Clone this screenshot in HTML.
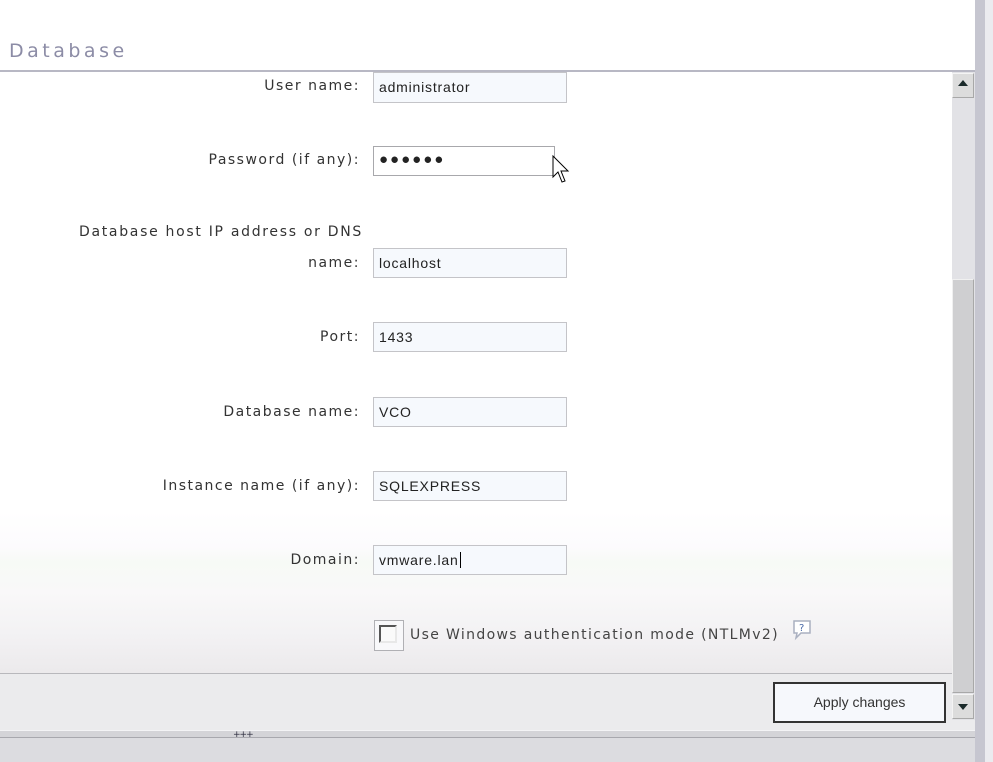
<!DOCTYPE html>
<html><head><style>
*{margin:0;padding:0;box-sizing:border-box}
body{width:993px;height:762px;position:relative;overflow:hidden;background:#fff;font-family:"DejaVu Sans","Liberation Sans",sans-serif}
.abs{position:absolute}
.lbl{position:absolute;right:633px;font-size:14px;letter-spacing:1.5px;color:#333;text-align:right;white-space:nowrap}
.inp{position:absolute;left:373px;width:194px;height:30px;border:1px solid #c4c4c8;background:#f6f9fd;font-family:"Liberation Sans",sans-serif;font-size:14px;color:#222;padding:6px 0 0 5px;letter-spacing:0.8px}
</style></head><body>
<div class="abs" style="left:0;top:0;width:975px;height:71px;background:#fff"></div>
<div class="abs" style="left:9px;top:40px;font-size:19px;letter-spacing:3.5px;color:#8c8ca6">Database</div>
<div class="abs" style="left:0;top:70px;width:975px;height:2px;background:#b8b8c4"></div>
<div class="abs" style="left:975px;top:0;width:10px;height:762px;background:#c6c6d0"></div>
<div class="abs" style="left:985px;top:0;width:8px;height:762px;background:#ebebef"></div>
<div class="abs" style="left:0;top:72px;width:952px;height:601px;background:linear-gradient(#fff 0,#fff 440px,#fcfbfd 475px,#f7faf6 490px,#f9f8f9 520px,#f3f2f4 560px,#eceaec 600px)"></div>
<div class="abs" style="left:0;top:673px;width:952px;height:1px;background:#b8b8bc"></div>
<div class="abs" style="left:0;top:674px;width:975px;height:56px;background:#ebebed"></div>
<div class="abs" style="left:0;top:730px;width:975px;height:8px;background:#d4d4d8;border-top:1px solid #f4f4f6;border-bottom:1px solid #a8a8ae"></div>
<div class="abs" style="left:233px;top:730px;font-size:9px;color:#334;letter-spacing:-1px">+++</div>
<div class="abs" style="left:0;top:738px;width:975px;height:24px;background:#dcdce0"></div>
<div class="abs" style="left:952px;top:72px;width:23px;height:648px;background:#e2e2e6"></div>
<div class="abs" style="left:952px;top:73px;width:22px;height:25px;background:#dcdcdc;border:1px solid #a8a8a8;border-top-color:#f4f4f4;border-left-color:#f4f4f4"></div>
<div class="abs" style="left:958px;top:80px;width:0;height:0;border-left:5px solid transparent;border-right:5px solid transparent;border-bottom:6px solid #1a2a2a"></div>
<div class="abs" style="left:952px;top:279px;width:22px;height:414px;background:#cfcfd1;border:1px solid #f0f0f0;border-right-color:#a8a8a8;border-bottom-color:#a8a8a8"></div>
<div class="abs" style="left:952px;top:694px;width:22px;height:25px;background:#dcdcdc;border:1px solid #a8a8a8;border-top-color:#f4f4f4;border-left-color:#f4f4f4"></div>
<div class="abs" style="left:958px;top:704px;width:0;height:0;border-left:5px solid transparent;border-right:5px solid transparent;border-top:6px solid #1a2a2a"></div>
<div class="lbl" style="top:78px">User name:</div>
<div class="inp" style="top:72px;height:31px">administrator</div>
<div class="lbl" style="top:152px">Password (if any):</div>
<div class="inp" style="top:146px;border-color:#a8a8ac;background:#fff;width:182px;font-size:15px;padding-top:4px;letter-spacing:2px">●●●●●●</div>
<svg class="abs" style="left:552px;top:155px" width="20" height="32" viewBox="0 0 20 32"><path d="M1 1 L1 22 L6 17 L10 27 L13 26 L9 16 L16 16 Z" fill="#fff" stroke="#000" stroke-width="1"/></svg>
<div class="lbl" style="top:224px;right:630px;letter-spacing:1.7px">Database host IP address or DNS</div>
<div class="lbl" style="top:255px">name:</div>
<div class="inp" style="top:248px">localhost</div>
<div class="lbl" style="top:329px">Port:</div>
<div class="inp" style="top:322px">1433</div>
<div class="lbl" style="top:404px">Database name:</div>
<div class="inp" style="top:397px">VCO</div>
<div class="lbl" style="top:478px">Instance name (if any):</div>
<div class="inp" style="top:471px">SQLEXPRESS</div>
<div class="lbl" style="top:552px">Domain:</div>
<div class="inp" style="top:545px">vmware.lan<span style="border-left:1px solid #000;margin-left:1px"></span></div>
<div class="abs" style="left:374px;top:620px;width:30px;height:31px;border:1px solid #b0b0b4;background:#f8f8fa"></div>
<div class="abs" style="left:379px;top:625px;width:18px;height:18px;border:2px solid #555;border-right-color:#e8e8e8;border-bottom-color:#e8e8e8;background:#fafafa"></div>
<div class="abs" style="left:410px;top:627px;font-size:14px;letter-spacing:1.35px;color:#444;white-space:nowrap">Use Windows authentication mode (NTLMv2)</div>
<svg class="abs" style="left:791px;top:619px" width="24" height="22" viewBox="0 0 24 22"><path d="M3 2 H19 V14 H10 L5 19 L6 14 H3 Z" fill="#fff" stroke="#aab0c0" stroke-width="1.5"/><text x="8" y="12" font-size="10" fill="#4a6aa8" font-family="DejaVu Sans">?</text></svg>
<div class="abs" style="left:773px;top:682px;width:173px;height:41px;border:2px solid #333;background:#f6f8fc;font-family:'Liberation Sans',sans-serif;font-size:14px;color:#333;text-align:center;line-height:37px">Apply changes</div>
</body></html>
